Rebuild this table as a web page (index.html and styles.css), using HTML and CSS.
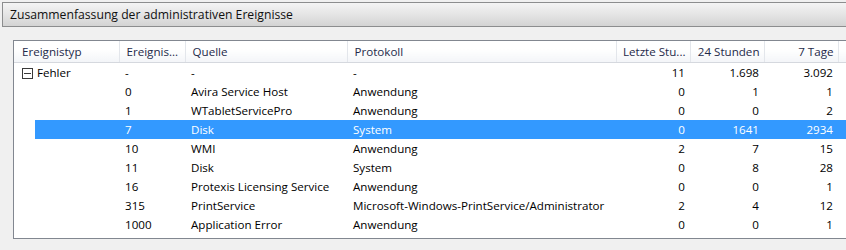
FILE: index.html
```html
<!DOCTYPE html>
<html>

<head>
  <title>Administrative Ereignisse</title>
  <meta charset="utf-8">
  <link rel="stylesheet" href="styles.css">
</head>

<body>
  <div class="titlebar">Zusammenfassung der administrativen Ereignisse</div>

  <div class="panel">
    <table class="events">
      <colgroup>
        <col class="c-typ">
        <col class="c-id">
        <col class="c-src">
        <col class="c-log">
        <col class="c-num">
        <col class="c-num">
        <col class="c-num">
        <col>
      </colgroup>
      <thead>
        <tr>
          <th>Ereignistyp</th>
          <th>Ereignis...</th>
          <th>Quelle</th>
          <th>Protokoll</th>
          <th class="num">Letzte Stu...</th>
          <th class="num">24 Stunden</th>
          <th class="num">7 Tage</th>
          <th></th>
        </tr>
      </thead>
      <tbody>
        <tr>
          <td class="group"><span class="toggle"></span>Fehler</td>
          <td>-</td>
          <td>-</td>
          <td>-</td>
          <td class="num">11</td>
          <td class="num">1.698</td>
          <td class="num">3.092</td>
          <td></td>
        </tr>
        <tr>
          <td></td>
          <td>0</td>
          <td>Avira Service Host</td>
          <td>Anwendung</td>
          <td class="num">0</td>
          <td class="num">1</td>
          <td class="num">1</td>
          <td></td>
        </tr>
        <tr>
          <td></td>
          <td>1</td>
          <td>WTabletServicePro</td>
          <td>Anwendung</td>
          <td class="num">0</td>
          <td class="num">0</td>
          <td class="num">2</td>
          <td></td>
        </tr>
        <tr class="selected">
          <td></td>
          <td>7</td>
          <td>Disk</td>
          <td>System</td>
          <td class="num">0</td>
          <td class="num">1641</td>
          <td class="num">2934</td>
          <td></td>
        </tr>
        <tr>
          <td></td>
          <td>10</td>
          <td>WMI</td>
          <td>Anwendung</td>
          <td class="num">2</td>
          <td class="num">7</td>
          <td class="num">15</td>
          <td></td>
        </tr>
        <tr>
          <td></td>
          <td>11</td>
          <td>Disk</td>
          <td>System</td>
          <td class="num">0</td>
          <td class="num">8</td>
          <td class="num">28</td>
          <td></td>
        </tr>
        <tr>
          <td></td>
          <td>16</td>
          <td>Protexis Licensing Service</td>
          <td>Anwendung</td>
          <td class="num">0</td>
          <td class="num">0</td>
          <td class="num">1</td>
          <td></td>
        </tr>
        <tr>
          <td></td>
          <td>315</td>
          <td>PrintService</td>
          <td>Microsoft-Windows-PrintService/Administrator</td>
          <td class="num">2</td>
          <td class="num">4</td>
          <td class="num">12</td>
          <td></td>
        </tr>
        <tr>
          <td></td>
          <td>1000</td>
          <td>Application Error</td>
          <td>Anwendung</td>
          <td class="num">0</td>
          <td class="num">0</td>
          <td class="num">1</td>
          <td></td>
        </tr>
      </tbody>
    </table>
  </div>
</body>

</html>
```

FILE: styles.css
```css
body {
  margin: 0;
  height: 250px;
  overflow: hidden;
  background-color: #f0f0f0;
  font-family: "Open Sans", "Noto Sans", sans-serif;
  font-size: 12px;
  color: #000;
}

.titlebar {
  margin: 2px 0 0 2px;
  height: 23px;
  line-height: 23px;
  padding-left: 7px;
  border: 1px solid #8c8d8e;
  border-right: none;
  background: linear-gradient(#f4f4f4, #e6e6e6 45%, #d3d3d3);
  color: #101010;
  font-size: 12.2px;
}

.panel {
  margin: 13px 0 0 13px;
  width: 860px;
  height: 197px;
  border: 1px solid #828790;
  background-color: #fff;
}

.events {
  border-collapse: collapse;
  table-layout: fixed;
  width: 860px;
  font-size: 11.6px;
}

.c-typ {
  width: 105px;
}

.c-id {
  width: 66px;
}

.c-src {
  width: 162px;
}

.c-log {
  width: 269px;
}

.c-num {
  width: 74px;
}

.events th {
  height: 21px;
  padding: 0 4px 0 7px;
  text-align: left;
  font-weight: normal;
  color: #1e2a4a;
  background: linear-gradient(#ffffff, #ffffff 40%, #f3f5f8);
  border-right: 1px solid #e3e6eb;
  border-bottom: 1px solid #d5d8de;
  white-space: nowrap;
  overflow: hidden;
}

.events th:first-child {
  padding-left: 8px;
}

.events th.num {
  padding-left: 0;
}

.events td {
  height: 19px;
  padding: 0 5px 0 6px;
  white-space: nowrap;
  overflow: hidden;
}

.events .num {
  text-align: right;
}

.group {
  padding-left: 8px !important;
}

/* tree expander: box with a minus */
.toggle {
  display: inline-block;
  position: relative;
  width: 11px;
  height: 11px;
  margin-right: 4px;
  vertical-align: -2px;
  border: 1px solid #3a3a3a;
  box-sizing: border-box;
}

.toggle::after {
  content: "";
  position: absolute;
  left: 1px;
  right: 1px;
  top: 4px;
  height: 1px;
  background-color: #3a3a3a;
}

.selected td {
  background-color: #3399ff;
  color: #fff;
}

.selected td:first-child {
  background: linear-gradient(to right, transparent 21px, #3399ff 21px);
}
```
